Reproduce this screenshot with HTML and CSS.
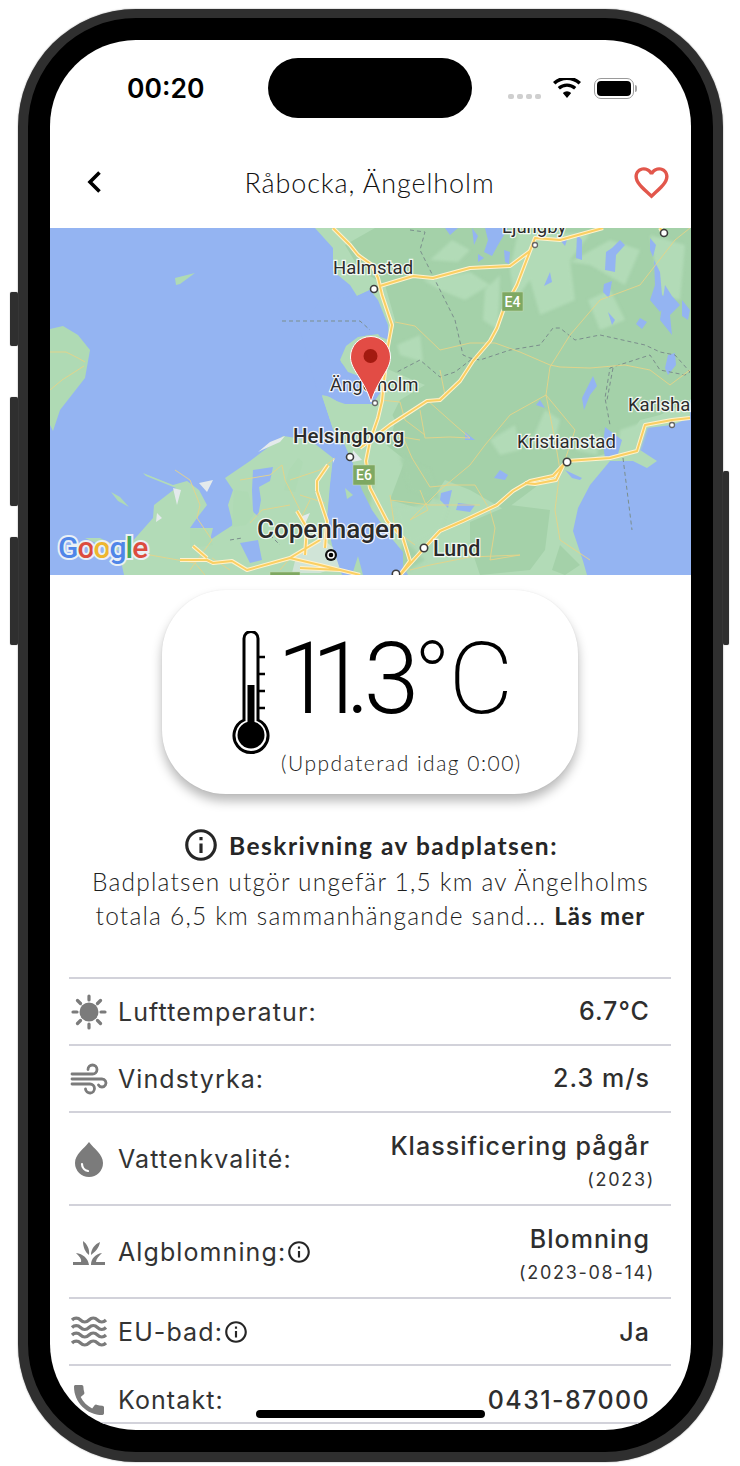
FILE: index.html
```html
<!DOCTYPE html>
<html lang="sv">
<head>
<meta charset="utf-8">
<title>Råbocka, Ängelholm</title>
<link rel="stylesheet" href="styles.css">
</head>
<body>
<div class="phone">
  <i class="btn btn-a"></i><i class="btn btn-b"></i><i class="btn btn-c"></i><i class="btn btn-r"></i>
  <div class="screen">
    <div class="island"></div>
    <div class="status">
      <span class="time">00:20</span>
      <div class="status-right">
        <div class="dots"><i></i><i></i><i></i><i></i></div>
        <svg class="wifi" width="28" height="20" viewBox="0 0 28 20"><path d="M14 20l-4.200-5a6.200 6.200 0 0 1 8.400 0zM6.900 11.600l-2.200-2.500a14 14 0 0 1 18.600 0l-2.200 2.500a10.600 10.600 0 0 0-14.200 0zM2.400 6.600L0 4a20.500 20.500 0 0 1 28 0l-2.400 2.600a17 17 0 0 0-23.200 0z"/></svg>
        <div class="battery"><i></i></div>
        <div class="battery-tip"></div>
      </div>
    </div>
    <header class="top">
      <svg class="back" width="16" height="24" viewBox="0 0 16 24"><path d="M13.500 2.500L4 12l9.500 9.500" fill="none" stroke="#000" stroke-width="3.600"/></svg>
      <h1 class="title">Råbocka, Ängelholm</h1>
      <svg class="heart" width="41" height="41" viewBox="0 0 24 24"><path fill="#e2574c" d="M16.500 3c-1.740 0-3.410.81-4.500 2.090C10.910 3.810 9.240 3 7.500 3 4.420 3 2 5.420 2 8.500c0 3.780 3.400 6.860 8.550 11.540L12 21.350l1.450-1.320C18.600 15.360 22 12.280 22 8.500 22 5.420 19.580 3 16.500 3zm-4.400 15.550l-.1.1-.1-.1C7.140 14.240 4 11.390 4 8.500 4 6.500 5.500 5 7.500 5c1.540 0 3.040.99 3.570 2.360h1.870C13.460 5.990 14.960 5 16.500 5c2 0 3.500 1.500 3.500 3.500 0 2.890-3.140 5.740-7.900 10.050z"/></svg>
    </header>

    <svg class="map" viewBox="50 228 641 347" width="641" height="347">
      <rect class="m-water" x="50" y="228" width="641" height="347"/>
      <g class="m-soft">
        <!-- west island -->
        <path class="m-land" d="M50 329L63 326 78 335 90 350 85 378 60 410 53 431 50 425z"/>
        <path class="m-land" d="M175 278L195 273 180 284 176 285zM111 492L120 497 129 507 118 501z"/>
        <!-- Zealand -->
        <path class="m-light" d="M283 436L310 440 333 458 330 485 327 521 340 561 360 575H124L118 547 100 538 85 538 100 545 123 552 153 518 154 505 176 488 146 476 143 473 173 485 187 481 199 490 207 505 197 518 190 528 213 528 210 540 222 532 233 525 228 505 233 490 225 478 250 461z"/>
        <path class="m-water" d="M253 470L273 467 270 481 259 487 261 500 258 516 253 512 252 490zM240 543L258 540 262 560 250 563z"/>
        <path class="m-land" d="M234 490L248 492 254 514 246 525 232 527z"/>
        <path class="m-land" d="M289 470L298 458 303 462 295 492 284 490zM190 528L208 530 213 545 190 548z"/>
        <path class="m-white" d="M199 483L213 480 207 492zM173 488L181 490 177 505zM157 513L162 518 156 522zM300 517L310 513 305 524zM333 458L339 463 333 470z"/>
        <path class="m-white" d="M285 436L270 442 258 452 262 450 280 442z"/>
        <path class="m-white" d="M297 553L322 538 338 552 344 565 320 573 292 573z" opacity=".6"/>
        <!-- Sweden -->
        <path class="m-light" d="M315 228L333 248 333 271 350 285 357 296 370 290 378 320 375 330 358 340 345 352 340 362 355 372 380 378 368 395 345 400 322 395 337 441 350 457 360 480 368 505 390 540 400 560 408 575H587L583 561 573 531 578 508 590 485 610 461 633 461 647 468 657 461 640 450 647 428 672 425 690 418V228z"/>
        <path class="m-dark" d="M375 228H691V400L660 415 640 420 620 450 575 462 545 480 505 510 470 490 445 480 425 510 390 500 405 460 380 440 400 400 425 385 385 368 395 320 385 285 360 270 345 245z"/>
        <path class="m-dark" d="M470 522L510 505 550 510 545 550 530 570 480 575 470 545zM560 545L580 565 565 575 552 570z"/>
        <path class="m-light m-softer" d="M397 345L420 335 423 362 400 355zM423 280L470 272 490 285 465 300 440 290zM485 290L500 275 498 330 483 320zM518 232L590 234 570 260 575 300 540 315 530 280 515 300 510 270zM570 262L610 240 640 250 625 285 590 265zM588 300L610 290 625 320 600 330zM430 260L452 240 470 250 458 262zM650 235L685 245 680 300 660 295zM620 430L650 420 640 450 615 460zM575 450L600 432 597 455zM545 410L560 420 555 440 530 445zM490 440L515 425 520 450 500 455zM395 510L450 500 440 530 410 545z"/>
        <path class="m-dark m-softer" d="M400 456L430 470 440 500 410 490zM355 470L375 480 368 515 352 490zM405 540L425 560 400 575 395 560z"/>
        <path class="m-water" d="M357 296L370 290 378 300 388 325 389 340 375 335 358 336 346 346 340 358 345 372 360 380 382 390 372 405 350 410 335 400 317 390 300 330 320 300z"/>
        <path class="m-light" d="M322 396L345 404 372 404 382 395 395 420 390 445 370 445 350 455 337 441z"/>
        <path class="m-light" d="M358 337L378 334 386 345 388 375 370 380 348 372 340 360 346 346z"/>
        <path class="m-water" d="M343 441L350 457 362 490 372 510 393 540 403 552 403 575H342L332 545 327 521 330 490 333 463z"/>
        <path class="m-white" d="M353 450L362 460 352 462z"/>
        <path class="m-land" d="M345 488L353 495 347 499zM358 556L363 575 352 575z"/>
        <!-- lakes -->
        <path class="m-water" d="M485 228H508L498 245 492 256 484 252 488 240zM472 228L478 236 474 245zM445 228H458L450 235zM504 250L510 252 509 264 505 262zM478 254L484 258 478 262z"/>
        <path class="m-water" d="M577 234L582 240 582 260 576 258zM560 240L567 240 565 246zM650 238L656 245 653 257 650 250zM654 260L660 272 662 295 668 300 660 312 650 300 655 285zM665 285L672 296 680 305 670 315 672 335 660 320zM682 300L690 310 688 320 682 316zM640 318L647 322 642 329 636 324zM604 284L612 281 609 298 603 292zM612 248L620 240 625 245 616 255 615 272 605 270 606 252zM550 272L552 282 544 286zM608 312L615 320 612 325z"/>
        <path class="m-water" d="M668 355L675 353 676 365 668 375 665 368zM593 376L597 386 590 395 584 410 582 398zM605 427L622 440 618 454 605 458 603 445zM465 432L475 440 465 440zM441 493L452 490 448 508 440 500zM458 503L475 505 470 512 456 510zM500 470L508 475 505 480 494 478zM565 470L582 478 580 480 572 478zM540 400L545 408 536 405z"/>
      </g>

      <!-- borders -->
      <path class="m-border" d="M282 321L360 321 370 330M410 230L425 232 420 250 440 290 455 320 463 355 470 358 480 360 510 350 540 345 553 328 560 328 575 340 600 335 645 345 660 352 675 355 690 372 685 375 660 370 650 355 610 368 605 398 610 425 M477 355L455 372 440 377 420 360 395 373M613 368L607 400"/>
      <path class="m-border" d="M623 458L632 530M230 540L242 538M270 535L280 545"/>

      <!-- minor roads -->
      <g class="m-minor">
        <path d="M50 352H66L78 358 85 362M50 390L62 380 84 366"/>
        <path d="M395 322L415 326 440 350 470 343 495 343 520 352 550 365 560 367 590 368 625 365 650 370 670 385 690 370"/>
        <path d="M550 367L570 335 600 300 640 285 675 240 690 228M550 367L546 395 575 430 565 460"/>
        <path d="M546 395L510 415 485 445 470 465 440 490 410 520M546 395L555 440 560 470 555 510 560 540 590 560"/>
        <path d="M440 370L445 395 435 400M427 400L455 425 470 438 450 437 425 438 420 410M420 440L390 435M400 430L412 458 430 487 450 485 475 485 490 510 495 528 490 560"/>
        <path d="M390 500L430 505 480 505M420 490L428 510 410 520M390 495L395 530 415 545M490 560L520 555 470 557 430 565 410 570M380 400L400 402 405 420 425 435"/>
        <path d="M175 470L190 480 200 505 197 518 212 540M240 480L270 475 282 465 285 480 300 510M290 480L320 470 335 458M300 495L325 503M250 523L262 510 290 505M212 558L230 570M212 540L190 570M290 558L280 570M300 520L310 500M150 555L195 563 205 555M195 563L205 575"/>
      </g>

      <!-- motorways -->
      <g class="m-road-case">
        <path id="r1" d="M333 228L350 245 358 255 372 265 378 278 382 295 392 325 387 351 382 401 378 418 370 441 366 461 370 488 387 521 403 538 410 561 400 575"/>
        <path id="r2" d="M360 448L390 425 427 401 440 400 460 381 473 361 490 341 497 328 503 311 517 285 530 251 535 238 560 240 603 228"/>
        <path id="r3" d="M400 575L427 545 440 531 463 521 497 505 513 491 530 481 553 476 567 461 610 458 637 451 645 425 672 420 690 418"/>
        <path id="r4" d="M380 286L413 276 433 278 470 268 510 266 530 251"/>
        <path id="r5" d="M180 560H207L213 563 232 561 247 570 290 558 320 565 360 575M193 546L207 558M317 491L317 481 328 465M317 491L327 521 325 548M297 511L307 528 305 555M290 558L320 540M300 568L340 570"/>
        <path id="r6" d="M660 228L665 236M563 466L556 480 535 484 525 483"/>
      </g>
      <g class="m-road">
        <use href="#r1"/><use href="#r2"/><use href="#r3"/><use href="#r4"/><use href="#r5"/><use href="#r6"/>
      </g>

      <!-- shields -->
      <rect class="m-shield" x="502" y="292" width="21" height="19"/>
      <text class="m-shield-t" x="512.500" y="307">E4</text>
      <rect class="m-shield" x="353" y="465" width="22" height="20"/>
      <text class="m-shield-t" x="364" y="480">E6</text>
      <rect class="m-shield" x="270" y="572" width="30" height="6"/>

      <!-- city dots -->
      <circle class="m-dot" cx="374" cy="289" r="3.500"/>
      <circle class="m-dot" cx="664" cy="233" r="3.500"/>
      <circle class="m-dot" cx="350" cy="457" r="3.500"/>
      <circle class="m-dot" cx="567" cy="462" r="3.700"/>
      <circle class="m-dot" cx="424" cy="548" r="3.700"/>
      <circle class="m-dot" cx="396" cy="574" r="3.700"/>
      <circle class="m-dot m-dot-s" cx="535" cy="245" r="2.500"/>
      <circle class="m-dot m-dot-s" cx="672" cy="425" r="2.500"/>
      <circle class="m-dot m-dot-s" cx="375" cy="403" r="2.500"/>
      <circle class="m-bull" cx="331" cy="555" r="6"/>
      <circle class="m-bull-in" cx="331" cy="555" r="3.800"/>
      <circle cx="331" cy="555" r="2.300"/>

      <!-- labels -->
      <text class="m-l m-l-h" x="333" y="274">Halmstad</text>
      <text class="m-l m-l-h" x="330" y="391">Ängelholm</text>
      <text class="m-l m-l-h" x="502" y="233">Ljungby</text>
      <text class="m-l m-l-b" x="293" y="443">Helsingborg</text>
      <text class="m-l m-l-k" x="517" y="448">Kristianstad</text>
      <text class="m-l m-l-k" x="628" y="411">Karlshamn</text>
      <text class="m-l m-l-c" x="257" y="538">Copenhagen</text>
      <text class="m-l m-l-d" x="433" y="556">Lund</text>

      <!-- pin -->
      <path class="m-pin" d="M371 336.500C359 336.500 350.500 346 350.500 357 350.500 370 364 379 371 402 378 379 390.500 370 390.500 357 390.500 346 382 336.500 371 336.500z"/>
      <circle class="m-pin-dot" cx="370.500" cy="356" r="7"/>

      <!-- logo -->
      <text class="m-g" x="58" y="558"><tspan class="g-b">G</tspan><tspan class="g-r">o</tspan><tspan class="g-y">o</tspan><tspan class="g-b">g</tspan><tspan class="g-g">l</tspan><tspan class="g-r">e</tspan></text>
    </svg>

    <section class="card">
      <svg class="thermo" width="38" height="124" viewBox="0 0 38 124">
        <path d="M12 4.500a7 7 0 0 1 14 0V86a17 17 0 1 1-14 0z" transform="translate(0 3)" fill="#fff" stroke="#000" stroke-width="3"/>
        <path d="M26 26h7M26 43h7M26 60h7M26 77h7" stroke="#000" stroke-width="2.400"/>
        <rect x="15.500" y="54" width="7" height="40" fill="#000"/>
        <circle cx="19" cy="104" r="13.500" fill="#000"/>
      </svg>
      <div class="reading">
        <div class="temp"><span class="t-ones">11</span><span class="t-rest">.3</span><span class="t-unit">°C</span></div>
        <div class="updated">(Uppdaterad idag 0:00)</div>
      </div>
    </section>

    <section class="desc">
      <div class="desc-head">
        <svg width="38" height="38" viewBox="0 0 24 24"><path class="ink" d="M11 7h2v2h-2zm0 4h2v6h-2zm1-9C6.480 2 2 6.480 2 12s4.480 10 10 10 10-4.480 10-10S17.520 2 12 2zm0 18c-4.410 0-8-3.590-8-8s3.590-8 8-8 8 3.590 8 8-3.590 8-8 8z"/></svg>
        <h2 class="desc-title">Beskrivning av badplatsen:</h2>
      </div>
      <p class="desc-text">Badplatsen utgör ungefär 1,5 km av Ängelholms<br>totala 6,5 km sammanhängande sand... <b class="more">Läs mer</b></p>
    </section>

    <section class="table">
      <div class="row">
        <div class="ico"><svg width="40" height="40" viewBox="0 0 40 40"><circle cx="20" cy="20" r="9.500" class="g"/><path class="gs" d="M20 4v4M20 32v4M4 20h4M32 20h4M8.500 8.500l3 3M28.500 28.500l3 3M8.500 31.500l3-3M28.500 11.500l3-3"/></svg></div>
        <span class="label">Lufttemperatur:</span>
        <div class="val"><span class="v">6.7°C</span></div>
      </div>
      <div class="row">
        <div class="ico"><svg width="40" height="40" viewBox="0 0 40 40"><path class="gw" d="M3 15h20.500a4.500 4.500 0 1 0-4.500-4.500M3 20h30a4 4 0 1 1-3.500 6M3 25h18a4.500 4.500 0 1 1-4.500 5"/></svg></div>
        <span class="label">Vindstyrka:</span>
        <div class="val"><span class="v">2.3 m/s</span></div>
      </div>
      <div class="row row-tall">
        <div class="ico"><svg width="40" height="40" viewBox="0 0 40 40"><path class="g" d="M20 3C15 10 6 15 6 24a14 14 0 0 0 28 0C34 15 25 10 20 3z"/><path d="M13 25c0 4 3 6.500 6 7" fill="none" stroke="#fff" stroke-width="2.200" stroke-linecap="round"/></svg></div>
        <span class="label">Vattenkvalité:</span>
        <div class="val"><span class="v">Klassificering pågår</span><span class="sub">(2023)</span></div>
      </div>
      <div class="row row-tall">
        <div class="ico"><svg width="40" height="40" viewBox="0 0 40 40"><path class="g" d="M7 21C14 22 19 26 20 33H4V30H12C13 27 10 24 7 21zM33 21C26 22 22 27 22 33H36V30H27C27 27 30 24 33 21zM14 9C18 12 21 17 20 23 16 20 14 15 14 9zM31 10C30 16 26 20 22 23 22 17 26 12 31 10z"/></svg></div>
        <span class="label">Algblomning:</span>
        <svg class="tip" width="26" height="26" viewBox="0 0 24 24"><path class="ink" d="M11 7h2v2h-2zm0 4h2v6h-2zm1-9C6.480 2 2 6.480 2 12s4.480 10 10 10 10-4.480 10-10S17.520 2 12 2zm0 18c-4.410 0-8-3.590-8-8s3.590-8 8-8 8 3.590 8 8-3.590 8-8 8z"/></svg>
        <div class="val"><span class="v">Blomning</span><span class="sub">(2023-08-14)</span></div>
      </div>
      <div class="row">
        <div class="ico"><svg width="40" height="40" viewBox="0 0 40 40"><path class="gv" d="M3 8c2.500-2.500 6-2.500 8.500 0s6 2.500 8.500 0 6-2.500 8.500 0 6 2.500 8.500 0M3 15.500c2.500-2.500 6-2.500 8.500 0s6 2.500 8.500 0 6-2.500 8.500 0 6 2.500 8.500 0M3 23c2.500-2.500 6-2.500 8.500 0s6 2.500 8.500 0 6-2.500 8.500 0 6 2.500 8.500 0M3 31c2.500-2.500 6-2.500 8.500 0s6 2.500 8.500 0 6-2.500 8.500 0 6 2.500 8.500 0"/></svg></div>
        <span class="label">EU-bad:</span>
        <svg class="tip" width="26" height="26" viewBox="0 0 24 24"><path class="ink" d="M11 7h2v2h-2zm0 4h2v6h-2zm1-9C6.480 2 2 6.480 2 12s4.480 10 10 10 10-4.480 10-10S17.520 2 12 2zm0 18c-4.410 0-8-3.590-8-8s3.590-8 8-8 8 3.590 8 8-3.590 8-8 8z"/></svg>
        <div class="val"><span class="v">Ja</span></div>
      </div>
      <div class="row row-last">
        <div class="ico"><svg width="42" height="42" viewBox="0 0 24 24"><path class="g" d="M20.010 15.380c-1.230 0-2.420-.2-3.530-.56-.35-.12-.74-.03-1.010.24l-1.570 1.970c-2.830-1.350-5.480-3.900-6.890-6.830l1.950-1.660c.27-.28.35-.67.24-1.020-.37-1.110-.56-2.300-.56-3.530 0-.54-.45-.99-.99-.99H4.190C3.650 3 3 3.240 3 3.990 3 13.280 10.730 21 20.010 21c.71 0 .99-.63.99-1.180v-3.450c0-.54-.45-.99-.99-.99z"/></svg></div>
        <span class="label">Kontakt:</span>
        <div class="val"><span class="v v-num">0431-87000</span></div>
      </div>
    </section>
    <div class="home"></div>
  </div>
</div>
</body>
</html>
```
FILE: styles.css
```css
* { box-sizing: border-box; }
html, body { margin: 0; padding: 0; background: #fff; }
body { width: 740px; height: 1466px; overflow: hidden; font-family: "Lato", sans-serif; }

.phone {
  position: relative;
  width: 705px;
  height: 1453px;
  margin: 9px 0 0 18px;
  padding: 22px;
  background: #000;
  border: 10px solid #2f2f2f;
  border-top-width: 9px;
  border-radius: 118px;
  box-shadow: 0 0 1.500px #777;
}
.btn { position: absolute; background: #2f2f2f; border-radius: 2px; box-shadow: 0 0 1px #777; }
.btn-a { left: -18px; top: 274px; width: 8px; height: 54px; }
.btn-b { left: -18px; top: 379px; width: 8px; height: 109px; }
.btn-c { left: -18px; top: 519px; width: 8px; height: 108px; }
.btn-r { right: -16px; top: 453px; width: 6px; height: 174px; }

.screen {
  position: relative;
  width: 641px;
  height: 1390px;
  background: #fff;
  border-radius: 86px;
  overflow: hidden;
}
.island { position: absolute; left: 218px; top: 18px; width: 204px; height: 60px; background: #000; border-radius: 30px; }
.home { position: absolute; left: 206px; top: 1370px; width: 229px; height: 8px; background: #000; border-radius: 4px; }

.status { display: flex; align-items: center; justify-content: space-between; height: 96px; padding: 0 54px 0 77px; }
.time { font-family: "Inter", sans-serif; font-weight: 600; font-size: 26.500px; color: #000; }
.status-right { display: flex; align-items: center; }
.dots { display: flex; gap: 3px; margin: 16px 12px 0 0; }
.dots i { width: 6px; height: 5px; border-radius: 2px; background: #cfcfcf; }
.wifi { margin-right: 13px; }
.battery { width: 40px; height: 21px; padding: 2px; border: 1.500px solid #9a9a9a; border-radius: 7px; }
.battery i { display: block; height: 100%; background: #000; border-radius: 4px; }
.battery-tip { width: 2px; height: 7px; margin-left: 1px; background: #a5a5a5; border-radius: 0 2px 2px 0; }

.top { display: flex; align-items: center; justify-content: space-between; height: 92px; padding: 0 19px 0 36px; }
.title { margin: 0 0 0 6px; font-weight: 300; font-size: 27px; color: #111; letter-spacing: .9px; }

.map { display: block; }
.m-soft { filter: blur(.7px); }
.m-softer { filter: blur(1.500px); }
.m-water { fill: #94b4f2; }
.m-land { fill: #afdab4; }
.m-light { fill: #b2dbb7; }
.m-dark { fill: #a4d1a9; }
.m-white { fill: #e4eaec; }
.m-minor { fill: none; stroke: #e6d488; stroke-width: .9; }
.m-border { fill: none; stroke: #7b8e8c; stroke-width: 1; stroke-dasharray: 4 3; }
.m-road-case { fill: none; stroke: #fff2cc; stroke-width: 4; stroke-linejoin: round; }
.m-road { fill: none; stroke: #fbcf62; stroke-width: 2; stroke-linejoin: round; }
.m-shield { fill: #7ea862; stroke: #c7dcb5; stroke-width: .5; }
.m-shield-t { font-family: "Roboto", sans-serif; font-size: 14px; font-weight: 500; fill: #fff; text-anchor: middle; }
.m-dot { fill: #fff; stroke: #3c3c3c; stroke-width: 1.600; }
.m-dot-s { stroke: #666; stroke-width: 1.300; }
.m-bull { fill: #111; }
.m-bull-in { fill: #fff; }
.m-l {
  font-family: "Roboto", sans-serif;
  font-size: 17px;
  fill: #2b2b2b;
  stroke: #fff;
  stroke-width: 2.500px;
  stroke-opacity: .85;
  paint-order: stroke;
}
.m-l-h { font-size: 18.500px; }
.m-l-k { font-size: 18.500px; }
.m-l-b { font-size: 20.500px; font-weight: 500; }
.m-l-c { font-size: 26px; font-weight: 500; }
.m-l-d { font-size: 21.500px; font-weight: 500; }
.m-pin { fill: #e24c45; stroke: #fff; stroke-width: 1; }
.m-pin-dot { fill: #a31a10; }
.m-g {
  font-family: "Roboto", sans-serif;
  font-size: 30px;
  font-weight: 500;
  letter-spacing: -1px;
  stroke: #e9f0f6;
  stroke-width: 4px;
  paint-order: stroke;
}
.g-b { fill: #4f86e8; }
.g-r { fill: #dc4c3e; }
.g-y { fill: #eeb62e; }
.g-g { fill: #42a85c; }

.card {
  display: flex;
  width: 416px;
  height: 204px;
  margin: 15px 0 0 112px;
  padding: 41px 0 0 70px;
  gap: 11px;
  background: #fff;
  border-radius: 64px;
  box-shadow: 0 0 1.500px rgba(0,0,0,.08), 0 7px 11px rgba(0,0,0,.28);
}
.thermo { flex: none; }
.reading { display: flex; flex-direction: column; }
.temp { display: flex; align-items: baseline; height: 96px; margin-left: -4px; font-family: "Roboto", sans-serif; font-size: 100px; line-height: 96px; color: #000; white-space: nowrap; }
.t-ones { font-weight: 350; letter-spacing: -21px; }
.t-rest { font-weight: 350; letter-spacing: -6px; }
.t-unit { font-weight: 200; letter-spacing: -3px; }
.updated { margin-top: 23px; font-weight: 300; font-size: 21px; color: #222; letter-spacing: 1.500px; white-space: nowrap; }

.desc { margin-top: 32px; text-align: center; }
.desc-head { display: flex; align-items: center; justify-content: center; gap: 9px; padding-right: 1px; height: 38px; }
.ink { fill: #262626; }
.desc-title { margin: 0; font-weight: 700; font-size: 24.500px; color: #262626; letter-spacing: 1.500px; }
.desc-text { margin: 1px 0 0; font-weight: 300; font-size: 24.500px; line-height: 34px; color: #1e1e1e; letter-spacing: 1.200px; }
.more { font-weight: 700; color: #262626; font-size: 24px; letter-spacing: 1.200px; }

.table { margin: 44px 20px 0 19px; border-bottom: 2px solid #d2d2da; }
.row { display: flex; align-items: center; height: 66.800px; padding-top: 1px; border-top: 2px solid #d2d2da; font-family: "Inter", sans-serif; color: #333; }
.row-tall { height: 93.400px; }
.row-last { height: 58px; padding-top: 12px; }
.ico { flex: none; width: 40px; height: 40px; margin-right: 9px; display: flex; align-items: center; justify-content: center; }
.g { fill: #7b7b7b; }
.gs { fill: none; stroke: #7b7b7b; stroke-width: 3.200; stroke-linecap: round; }
.gw { fill: none; stroke: #7b7b7b; stroke-width: 2.800; stroke-linecap: round; }
.gv { fill: none; stroke: #7b7b7b; stroke-width: 3.200; stroke-linecap: butt; }
.label { font-size: 25px; letter-spacing: 1.100px; }
.tip { flex: none; }
.val { margin-left: auto; padding-right: 21px; display: flex; flex-direction: column; align-items: flex-end; }
.row-tall .val { padding-top: 8px; }
.v { font-size: 25px; font-weight: 450; letter-spacing: 1.050px; color: #2e2e2e; line-height: 33px; }
.v-num { letter-spacing: 1.400px; }
.sub { font-size: 18px; letter-spacing: 1.700px; color: #333; line-height: 33px; margin-right: -5px; }
```
